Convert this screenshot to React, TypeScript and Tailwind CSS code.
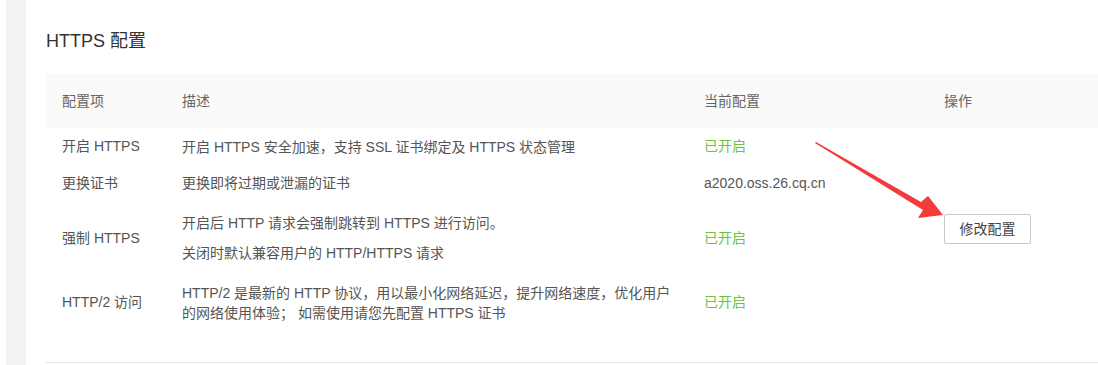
const font = { fontFamily: '"Liberation Sans", "Noto Sans CJK SC", sans-serif' };

const rows = [
  { name: "开启 HTTPS", desc: ["开启 HTTPS 安全加速，支持 SSL 证书绑定及 HTTPS 状态管理"], value: "已开启", on: true, h: "h-[37px]", gap: false },
  { name: "更换证书", desc: ["更换即将过期或泄漏的证书"], value: "a2020.oss.26.cq.cn", on: false, h: "h-[36px]", gap: false },
  {
    name: "强制 HTTPS",
    desc: ["开启后 HTTP 请求会强制跳转到 HTTPS 进行访问。", "关闭时默认兼容用户的 HTTP/HTTPS 请求"],
    value: "已开启",
    on: true,
    h: "h-[74px]",
    gap: true,
  },
  {
    name: "HTTP/2 访问",
    desc: ["HTTP/2 是最新的 HTTP 协议，用以最小化网络延迟，提升网络速度，优化用户", "的网络使用体验； 如需使用请您先配置 HTTPS 证书"],
    value: "已开启",
    on: true,
    h: "h-[55px]",
    gap: false,
  },
];

export default function App() {
  return (
    <div className="relative w-[1098px] h-[365px] overflow-hidden flex bg-white text-[14px]" style={font}>
      <div className="w-[6px] bg-white" />
      <div className="w-[20px] bg-[#f2f2f2]" />
      <main className="flex-1 pl-[20px] pt-[29px]">
        <h2 className="text-[18px] leading-[24px] text-[#333]">HTTPS 配置</h2>

        <div className="mt-[21px] grid grid-cols-[136px_522px_240px_1fr]">
          {/* header */}
          <div className="h-[54px] bg-[#fafafa] pl-4 flex items-center text-[#666]">配置项</div>
          <div className="h-[54px] bg-[#fafafa] flex items-center text-[#666]">描述</div>
          <div className="h-[54px] bg-[#fafafa] flex items-center text-[#666]">当前配置</div>
          <div className="h-[54px] bg-[#fafafa] flex items-center text-[#666]">操作</div>

          {rows.map((r, i) => (
            <div key={r.name} className="contents">
              <div className={`${r.h} pl-4 flex items-center text-[#555]`}>{r.name}</div>
              <div className={`${r.h} flex flex-col justify-center text-[#555] leading-[20px] ${r.gap ? "gap-[10px]" : ""}`}>
                {r.desc.map((d) => (
                  <div key={d} className="whitespace-nowrap">{d}</div>
                ))}
              </div>
              <div className={`${r.h} flex items-center ${r.on ? "text-[#6cc53f]" : "text-[#555]"}`}>{r.value}</div>
              {i === 0 && (
                <div className="row-span-4 flex items-center">
                  <button className="w-[87px] h-[30px] border border-[#c8c8c8] rounded-[2px] bg-white text-[#444] text-[14px]">
                    修改配置
                  </button>
                </div>
              )}
            </div>
          ))}
        </div>

        <div className="mt-[32px] border-t border-[#e6e6ee]" />
      </main>

      {/* red annotation arrow */}
      <svg className="absolute left-0 top-0 pointer-events-none" width="1098" height="365">
        <polygon
          points="816,142 921,202 928,196 943,215 918,218 923,210 815,143"
          fill="#f53a3a"
        />
      </svg>
    </div>
  );
}
